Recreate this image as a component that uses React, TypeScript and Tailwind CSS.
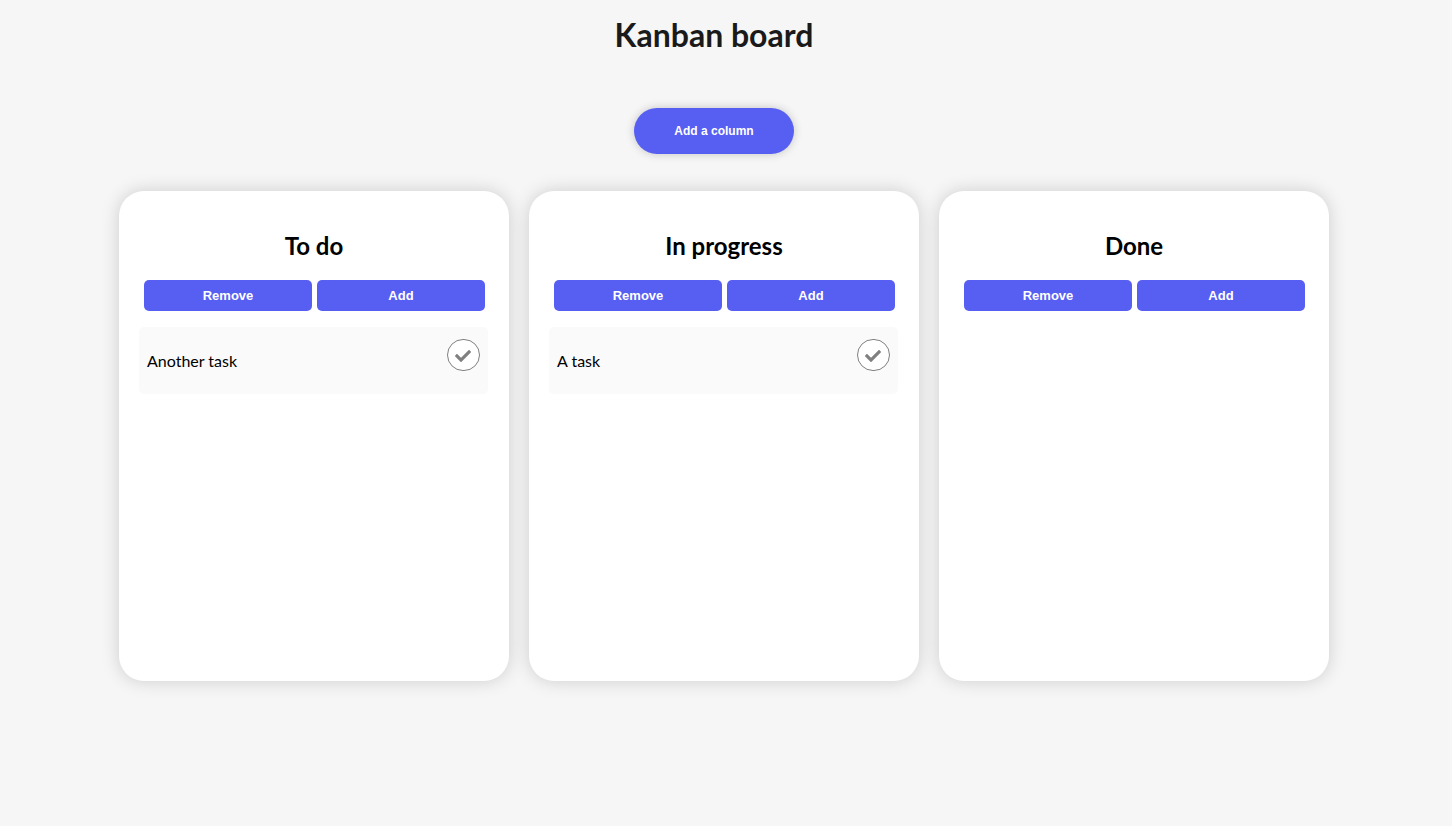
import { FaCheck } from "react-icons/fa";

type Column = { title: string; tasks: string[] };

const columns: Column[] = [
  { title: "To do", tasks: ["Another task"] },
  { title: "In progress", tasks: ["A task"] },
  { title: "Done", tasks: [] },
];

function ColumnButton({ children }: { children: string }) {
  return (
    <button
      type="button"
      className="h-[31px] flex-1 rounded-[5px] bg-[#575ef2] font-['Liberation_Sans',sans-serif] text-[13px] font-bold text-white"
    >
      {children}
    </button>
  );
}

function Task({ name }: { name: string }) {
  return (
    <li className="mr-px flex h-[67px] items-start justify-between rounded-[5px] bg-[#fafafa] px-2 pt-3">
      <p className="pt-[10px] text-base">{name}</p>
      <button
        type="button"
        aria-label={`Complete ${name}`}
        className="flex h-8 w-[33px] items-center justify-center rounded-full border border-[#808080] bg-white pt-0.5 pr-px text-[#808080]"
      >
        <FaCheck size={16} />
      </button>
    </li>
  );
}

function BoardColumn({ title, tasks }: Column) {
  return (
    <section className="min-h-[490px] w-[390px] rounded-[25px] bg-white px-5 pt-10 shadow-[0_0_18px_rgba(0,0,0,0.17)]">
      <h2 className="text-center text-2xl leading-[30px] font-bold">{title}</h2>
      <div className="mt-[19px] flex gap-[5px] pr-1 pl-[5px]">
        <ColumnButton>Remove</ColumnButton>
        <ColumnButton>Add</ColumnButton>
      </div>
      <ul className="mt-4">
        {tasks.map((task) => (
          <Task key={task} name={task} />
        ))}
      </ul>
    </section>
  );
}

export default function App() {
  return (
    <main className="min-h-screen bg-[#f6f6f6] font-[Lato,sans-serif] text-black">
      <header className="flex flex-col items-center pt-4 pr-6">
        <h1 className="text-[32px] leading-[38px] font-bold text-[#1a1a1a]">Kanban board</h1>
        <button
          type="button"
          className="mt-[54px] h-[46px] w-40 rounded-full bg-[#575ef2] font-['Liberation_Sans',sans-serif] text-xs font-bold text-white shadow-[0_0_10px_rgba(0,0,0,0.2)]"
        >
          Add a column
        </button>
      </header>
      <div className="mt-[37px] flex flex-wrap justify-center gap-5 pr-1 pb-10">
        {columns.map((column) => (
          <BoardColumn key={column.title} {...column} />
        ))}
      </div>
    </main>
  );
}
